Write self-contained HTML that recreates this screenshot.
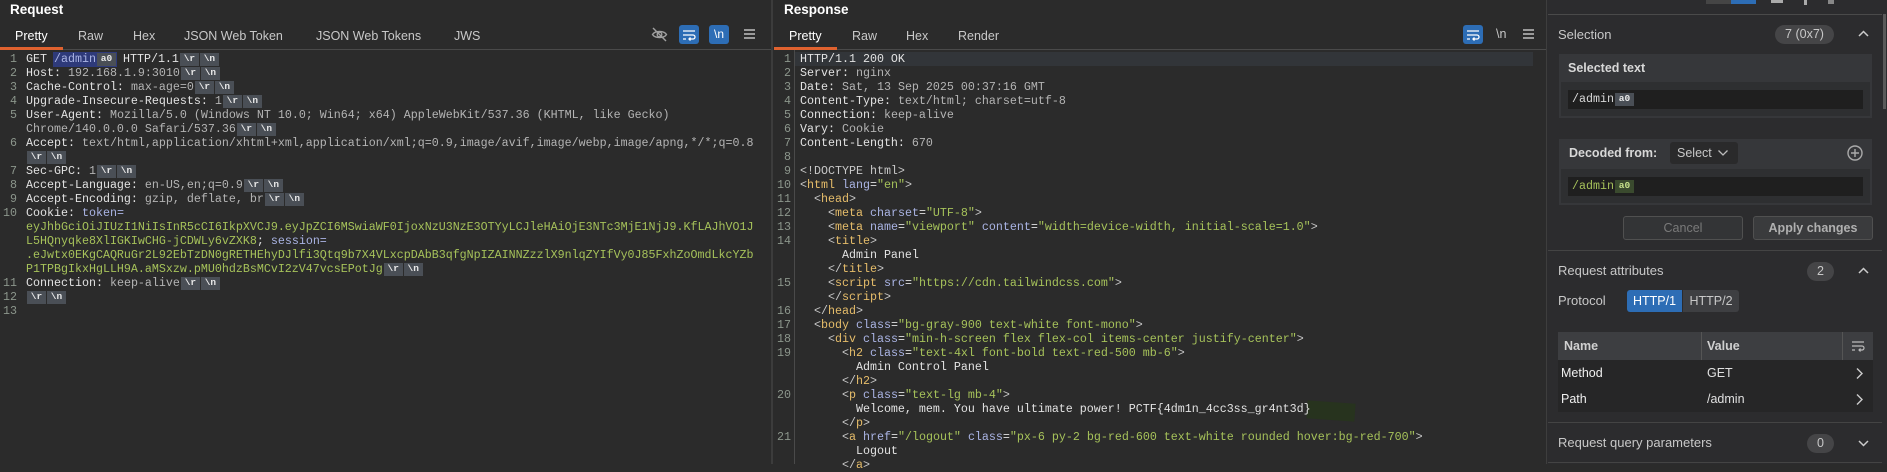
<!DOCTYPE html>
<html><head><meta charset="utf-8"><style>
*{margin:0;padding:0;box-sizing:border-box}
body{width:1887px;height:464px;background:#2b2b2b;overflow:hidden;position:relative;font-family:"Liberation Sans",sans-serif;color:#dcdcdc}
.a{position:absolute;white-space:pre}
.mono{font-family:"Liberation Mono",monospace;font-size:11.67px;line-height:14px}
.ln{position:absolute;font-family:"Liberation Mono",monospace;font-size:11.67px;line-height:14px;color:#8c968c;text-align:right}
.b{display:inline-block;background:#4a4f56;color:#e8e8e8;font-size:9.5px;line-height:12px;height:13px;width:19px;text-align:center;margin-left:1px;vertical-align:1px;font-weight:bold}
.v{color:#b4b4b4}.g{color:#a6c25a}.l{color:#aab4e4}.t{color:#e6bd6a}.p{color:#c8c8c8}.w{color:#e2e2e2}
.tab{position:absolute;top:29px;font-size:12.5px;color:#c8c8c8}
.title{position:absolute;top:2px;font-size:13.5px;font-weight:bold;color:#fff}
.btn{position:absolute;background:#2d6db5;border-radius:3px;width:20px;height:19px;top:25px}
</style></head><body>

<!-- Request panel -->
<div class="title" style="left:10px">Request</div>
<div class="tab" style="left:15px;color:#fff">Pretty</div>
<div class="tab" style="left:78px">Raw</div>
<div class="tab" style="left:133px">Hex</div>
<div class="tab" style="left:184px">JSON Web Token</div>
<div class="tab" style="left:316px">JSON Web Tokens</div>
<div class="tab" style="left:454px">JWS</div>
<div class="a" style="left:0;top:47px;width:63px;height:3px;background:#e0622f"></div>
<div class="a" style="left:63px;top:49px;width:709px;height:1px;background:#4a4a4a"></div>
<svg class="a" style="left:651px;top:26px" width="17" height="17" viewBox="0 0 17 17" fill="none" stroke="#a0a0a0" stroke-width="1.4"><path d="M1.5 8.5C4 4.5 13 4.5 15.5 8.5C13 12.5 4 12.5 1.5 8.5Z"/><circle cx="8.5" cy="8.5" r="2.3"/><path d="M2 2L15 15"/></svg>
<div class="btn" style="left:679px"><svg width="20" height="19" viewBox="0 0 20 19" fill="none" stroke="#fff" stroke-width="1.3"><path d="M4 6H16M4 10H14a2 2 0 0 1 0 4H10M11.5 12.5L10 14L11.5 15.5M4 14H7"/></svg></div>
<div class="btn" style="left:709px;color:#fff;font-size:12px;text-align:center;line-height:19px">\n</div>
<div class="a" style="left:744px;top:29px;width:11px;height:2px;background:#9a9a9a;box-shadow:0 4px 0 #9a9a9a,0 8px 0 #9a9a9a"></div>

<div class="ln" style="left:0;top:52px;width:17px">1<br>2<br>3<br>4<br>5<br><br>6<br><br>7<br>8<br>9<br>10<br><br><br><br><br>11<br>12<br>13</div>
<div class="a" style="left:53px;top:52px;width:64px;height:15px;background:#2e3a7a"></div>
<div class="a mono w" style="left:26px;top:52px">GET <span class="l">/admin</span><span class="b">a0</span> HTTP/1.1<span class="b">\r</span><span class="b">\n</span>
Host: <span class="v">192.168.1.9:3010</span><span class="b">\r</span><span class="b">\n</span>
Cache-Control: <span class="v">max-age=0</span><span class="b">\r</span><span class="b">\n</span>
Upgrade-Insecure-Requests: <span class="v">1</span><span class="b">\r</span><span class="b">\n</span>
User-Agent: <span class="v">Mozilla/5.0 (Windows NT 10.0; Win64; x64) AppleWebKit/537.36 (KHTML, like Gecko)</span>
<span class="v">Chrome/140.0.0.0 Safari/537.36</span><span class="b">\r</span><span class="b">\n</span>
Accept: <span class="v">text/html,application/xhtml+xml,application/xml;q=0.9,image/avif,image/webp,image/apng,*/*;q=0.8</span>
<span class="b">\r</span><span class="b">\n</span>
Sec-GPC: <span class="v">1</span><span class="b">\r</span><span class="b">\n</span>
Accept-Language: <span class="v">en-US,en;q=0.9</span><span class="b">\r</span><span class="b">\n</span>
Accept-Encoding: <span class="v">gzip, deflate, br</span><span class="b">\r</span><span class="b">\n</span>
Cookie: <span class="l">token=</span>
<span class="g">eyJhbGciOiJIUzI1NiIsInR5cCI6IkpXVCJ9.eyJpZCI6MSwiaWF0IjoxNzU3NzE3OTYyLCJleHAiOjE3NTc3MjE1NjJ9.KfLAJhVO1J</span>
<span class="g">L5HQnyqke8XlIGKIwCHG-jCDWLy6vZXK8</span>; <span class="l">session=</span>
<span class="g">.eJwtx0EKgCAQRuGr2L92EbTzDN0gRETHEhyDJlfi3Qtq9b7X4VLxcpDAbB3qfgNpIZAINNZzzlX9nlqZYIfVy0J85FxhZoOmdLkcYZb</span>
<span class="g">P1TPBgIkxHgLLH9A.aMSxzw.pMU0hdzBsMCvI2zV47vcsEPotJg</span><span class="b">\r</span><span class="b">\n</span>
Connection: <span class="v">keep-alive</span><span class="b">\r</span><span class="b">\n</span>
<span class="b">\r</span><span class="b">\n</span>
</div>

<!-- divider -->
<div class="a" style="left:771px;top:0;width:2px;height:464px;background:#3c3c3c"></div>

<!-- Response panel -->
<div class="title" style="left:784px">Response</div>
<div class="tab" style="left:789px;color:#fff">Pretty</div>
<div class="tab" style="left:852px">Raw</div>
<div class="tab" style="left:906px">Hex</div>
<div class="tab" style="left:958px">Render</div>
<div class="a" style="left:774px;top:47px;width:63px;height:3px;background:#e0622f"></div>
<div class="a" style="left:837px;top:49px;width:709px;height:1px;background:#4a4a4a"></div>
<div class="btn" style="left:1463px"><svg width="20" height="19" viewBox="0 0 20 19" fill="none" stroke="#fff" stroke-width="1.3"><path d="M4 6H16M4 10H14a2 2 0 0 1 0 4H10M11.5 12.5L10 14L11.5 15.5M4 14H7"/></svg></div>
<div class="a" style="left:1496px;top:27px;color:#c8c8c8;font-size:12.5px">\n</div>
<div class="a" style="left:1523px;top:29px;width:11px;height:2px;background:#9a9a9a;box-shadow:0 4px 0 #9a9a9a,0 8px 0 #9a9a9a"></div>
<div class="a" style="left:794px;top:50px;width:1px;height:414px;background:#4a4a4a"></div>
<div class="a" style="left:795px;top:52px;width:738px;height:14px;background:#323539"></div>
<div class="ln" style="left:773px;top:52px;width:18px">1<br>2<br>3<br>4<br>5<br>6<br>7<br>8<br>9<br>10<br>11<br>12<br>13<br>14<br><br><br>15<br><br>16<br>17<br>18<br>19<br><br><br>20<br><br><br>21</div>
<div class="a" style="left:1307px;top:402px;width:48px;height:18px;background:#27331e;transform:rotate(4deg)"></div>
<div class="a mono w" style="left:800px;top:52px">HTTP/1.1 200 OK
Server: <span class="v">nginx</span>
Date: <span class="v">Sat, 13 Sep 2025 00:37:16 GMT</span>
Content-Type: <span class="v">text/html; charset=utf-8</span>
Connection: <span class="v">keep-alive</span>
Vary: <span class="v">Cookie</span>
Content-Length: <span class="v">670</span>

<span class="p">&lt;!DOCTYPE html&gt;</span>
<span class="p">&lt;</span><span class="t">html</span> <span class="l">lang</span>=<span class="g">"en"</span><span class="p">&gt;</span>
  <span class="p">&lt;</span><span class="t">head</span><span class="p">&gt;</span>
    <span class="p">&lt;</span><span class="t">meta</span> <span class="l">charset</span>=<span class="g">"UTF-8"</span><span class="p">&gt;</span>
    <span class="p">&lt;</span><span class="t">meta</span> <span class="l">name</span>=<span class="g">"viewport"</span> <span class="l">content</span>=<span class="g">"width=device-width, initial-scale=1.0"</span><span class="p">&gt;</span>
    <span class="p">&lt;</span><span class="t">title</span><span class="p">&gt;</span>
      Admin Panel
    <span class="p">&lt;/</span><span class="t">title</span><span class="p">&gt;</span>
    <span class="p">&lt;</span><span class="t">script</span> <span class="l">src</span>=<span class="g">"https://cdn.tailwindcss.com"</span><span class="p">&gt;</span>
    <span class="p">&lt;/</span><span class="t">script</span><span class="p">&gt;</span>
  <span class="p">&lt;/</span><span class="t">head</span><span class="p">&gt;</span>
  <span class="p">&lt;</span><span class="t">body</span> <span class="l">class</span>=<span class="g">"bg-gray-900 text-white font-mono"</span><span class="p">&gt;</span>
    <span class="p">&lt;</span><span class="t">div</span> <span class="l">class</span>=<span class="g">"min-h-screen flex flex-col items-center justify-center"</span><span class="p">&gt;</span>
      <span class="p">&lt;</span><span class="t">h2</span> <span class="l">class</span>=<span class="g">"text-4xl font-bold text-red-500 mb-6"</span><span class="p">&gt;</span>
        Admin Control Panel
      <span class="p">&lt;/</span><span class="t">h2</span><span class="p">&gt;</span>
      <span class="p">&lt;</span><span class="t">p</span> <span class="l">class</span>=<span class="g">"text-lg mb-4"</span><span class="p">&gt;</span>
        Welcome, mem. You have ultimate power! PCTF{4dm1n_4cc3ss_gr4nt3d}
      <span class="p">&lt;/</span><span class="t">p</span><span class="p">&gt;</span>
      <span class="p">&lt;</span><span class="t">a</span> <span class="l">href</span>=<span class="g">"/logout"</span> <span class="l">class</span>=<span class="g">"px-6 py-2 bg-red-600 text-white rounded hover:bg-red-700"</span><span class="p">&gt;</span>
        Logout
      <span class="p">&lt;/</span><span class="t">a</span><span class="p">&gt;</span>
</div>

<!-- Inspector panel -->
<div class="a" style="left:1546px;top:0;width:341px;height:464px;background:#2c2c2e;border-left:1px solid #3e3e3e"></div>
<div class="a" style="left:1706px;top:0;width:25px;height:4px;background:#454545"></div>
<div class="a" style="left:1731px;top:0;width:25px;height:4px;background:#2d6db5"></div>
<div class="a" style="left:1771px;top:0;width:12px;height:3px;background:#aaa"></div>
<div class="a" style="left:1804px;top:0;width:3px;height:5px;background:#aaa"></div>
<div class="a" style="left:1828px;top:0;width:6px;height:4px;background:#888"></div>
<div class="a" style="left:1548px;top:14px;width:334px;height:1px;background:#4a4a4a"></div>
<div class="a" style="left:1883px;top:14px;width:3px;height:95px;background:#5a5a5a"></div>

<div class="a" style="left:1558px;top:27px;font-size:13px;color:#c8c8c8">Selection</div>
<div class="a" style="left:1775px;top:25px;width:59px;height:19px;border-radius:10px;background:#454547;color:#c8c8c8;font-size:12.5px;text-align:center;line-height:19px">7 (0x7)</div>
<svg class="a" style="left:1857px;top:29px" width="13" height="10" viewBox="0 0 13 10" fill="none" stroke="#ccc" stroke-width="1.5"><path d="M2 7L6.5 2.5L11 7"/></svg>

<div class="a" style="left:1559px;top:54px;width:313px;height:64px;background:#36373a"></div>
<div class="a" style="left:1568px;top:61px;font-size:12.5px;font-weight:bold;color:#d8d8d8">Selected text</div>
<div class="a" style="left:1561px;top:82px;width:309px;height:34px;background:#2e2f31"></div>
<div class="a" style="left:1568px;top:90px;width:295px;height:19px;background:#1f1f1f"></div>
<div class="a mono" style="left:1572px;top:92px;color:#d8d8d8">/admin<span class="b" style="background:#4a4f56">a0</span></div>

<div class="a" style="left:1559px;top:139px;width:313px;height:66px;background:#36373a"></div>
<div class="a" style="left:1569px;top:146px;font-size:12.5px;font-weight:bold;color:#d8d8d8">Decoded from:</div>
<div class="a" style="left:1670px;top:142px;width:68px;height:22px;background:#2a2a2b;border-radius:3px;font-size:12.5px;color:#c8c8c8;line-height:22px;padding-left:7px">Select</div>
<svg class="a" style="left:1717px;top:148px" width="12" height="9" viewBox="0 0 12 9" fill="none" stroke="#bbb" stroke-width="1.3"><path d="M1.5 2.5L6 7L10.5 2.5"/></svg>
<svg class="a" style="left:1846px;top:144px" width="18" height="18" viewBox="0 0 18 18" fill="none" stroke="#aaa" stroke-width="1.4"><circle cx="9" cy="9" r="7"/><path d="M9 5V13M5 9H13"/></svg>
<div class="a" style="left:1561px;top:169px;width:309px;height:34px;background:#2e2f31"></div>
<div class="a" style="left:1568px;top:177px;width:295px;height:19px;background:#1f1f1f"></div>
<div class="a mono" style="left:1572px;top:179px;color:#a6c25a">/admin<span class="b" style="background:#3a4a2e;color:#c6e08a">a0</span></div>

<div class="a" style="left:1623px;top:216px;width:120px;height:24px;border:1px solid #505050;border-radius:3px;background:#333436;color:#7a7a7a;font-size:12.5px;text-align:center;line-height:22px">Cancel</div>
<div class="a" style="left:1753px;top:216px;width:120px;height:24px;border:1px solid #505050;border-radius:3px;background:#3a3b3d;color:#b0b0b0;font-size:12.5px;font-weight:bold;text-align:center;line-height:22px">Apply changes</div>

<div class="a" style="left:1548px;top:250px;width:334px;height:1px;background:#444"></div>
<div class="a" style="left:1558px;top:263px;font-size:13px;color:#c8c8c8">Request attributes</div>
<div class="a" style="left:1807px;top:262px;width:27px;height:19px;border-radius:10px;background:#454547;color:#c8c8c8;font-size:12.5px;text-align:center;line-height:19px">2</div>
<svg class="a" style="left:1857px;top:266px" width="13" height="10" viewBox="0 0 13 10" fill="none" stroke="#ccc" stroke-width="1.5"><path d="M2 7L6.5 2.5L11 7"/></svg>
<div class="a" style="left:1558px;top:293px;font-size:13px;color:#c8c8c8">Protocol</div>
<div class="a" style="left:1627px;top:290px;width:55px;height:22px;background:#2d6db5;border-radius:3px 0 0 3px;color:#fff;font-size:12.5px;text-align:center;line-height:22px">HTTP/1</div>
<div class="a" style="left:1683px;top:290px;width:56px;height:22px;background:#3e3f42;border-radius:0 3px 3px 0;color:#c8c8c8;font-size:12.5px;text-align:center;line-height:22px">HTTP/2</div>

<div class="a" style="left:1558px;top:332px;width:315px;height:28px;background:#3d3e41"></div>
<div class="a" style="left:1701px;top:332px;width:1px;height:28px;background:#555"></div>
<div class="a" style="left:1842px;top:332px;width:1px;height:28px;background:#555"></div>
<div class="a" style="left:1564px;top:339px;font-size:12.5px;font-weight:bold;color:#d0d0d0">Name</div>
<div class="a" style="left:1707px;top:339px;font-size:12.5px;font-weight:bold;color:#d0d0d0">Value</div>
<svg class="a" style="left:1851px;top:339px" width="14" height="14" viewBox="0 0 14 14" fill="none" stroke="#bbb" stroke-width="1.2"><path d="M1 3H13M1 7H11a2 2 0 0 1 0 4H8M9.5 9.5L8 11L9.5 12.5M1 11H4"/></svg>
<div class="a" style="left:1558px;top:360px;width:315px;height:52px;background:#262627"></div>
<div class="a" style="left:1561px;top:366px;font-size:12.5px;color:#f0f0f0">Method</div>
<div class="a" style="left:1707px;top:366px;font-size:12.5px;color:#e0e0e0">GET</div>
<div class="a" style="left:1561px;top:392px;font-size:12.5px;color:#f0f0f0">Path</div>
<div class="a" style="left:1707px;top:392px;font-size:12.5px;color:#e0e0e0">/admin</div>
<svg class="a" style="left:1855px;top:367px" width="9" height="13" viewBox="0 0 9 13" fill="none" stroke="#ccc" stroke-width="1.4"><path d="M2 1.5L7 6.5L2 11.5"/></svg>
<svg class="a" style="left:1855px;top:393px" width="9" height="13" viewBox="0 0 9 13" fill="none" stroke="#ccc" stroke-width="1.4"><path d="M2 1.5L7 6.5L2 11.5"/></svg>

<div class="a" style="left:1548px;top:422px;width:334px;height:1px;background:#444"></div>
<div class="a" style="left:1558px;top:435px;font-size:13px;color:#c8c8c8">Request query parameters</div>
<div class="a" style="left:1807px;top:434px;width:27px;height:19px;border-radius:10px;background:#454547;color:#c8c8c8;font-size:12.5px;text-align:center;line-height:19px">0</div>
<svg class="a" style="left:1857px;top:438px" width="13" height="10" viewBox="0 0 13 10" fill="none" stroke="#ccc" stroke-width="1.5"><path d="M2 3L6.5 7.5L11 3"/></svg>
<div class="a" style="left:1548px;top:462px;width:334px;height:1px;background:#444"></div>
</body></html>
